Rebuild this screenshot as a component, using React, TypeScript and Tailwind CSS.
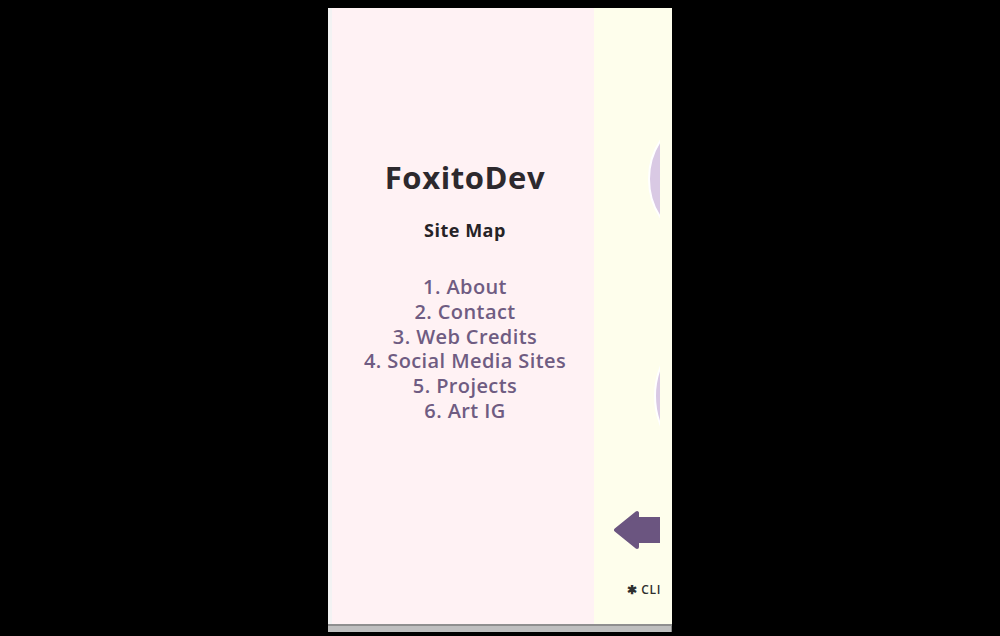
const siteMap = [
    "1. About",
    "2. Contact",
    "3. Web Credits",
    "4. Social Media Sites",
    "5. Projects",
    "6. Art IG",
];

const App: React.FC = () => {
    return (
        <div className="flex h-[636px] w-full justify-center overflow-hidden bg-black pt-[8px] font-['Open_Sans',sans-serif]">
            <div className="flex h-[624px] w-[344px] flex-col">
                <div className="flex h-[616px]">
                    <div className="w-[4px] bg-[#f3f3f3]" />
                    <div className="flex w-[262px] flex-col items-center bg-[#fff2f4] pt-[149px] pl-[4px]">
                        <h1 className="text-[31px] font-bold leading-[40px] tracking-[0.6px] text-[#2d292d]">
                            FoxitoDev
                        </h1>
                        <h2 className="mt-[21px] text-[18px] font-bold leading-[24px] tracking-[0.5px] text-[#262326]">
                            Site Map
                        </h2>
                        <ul className="mt-[33px] flex flex-col items-center text-[20px] font-semibold leading-[24.8px] tracking-[0.4px] text-[#6f5c82]">
                            {siteMap.map((item) => (
                                <li key={item}>{item}</li>
                            ))}
                        </ul>
                    </div>
                    <div className="w-[78px] bg-[#fefeec] pr-[12px]">
                        <div className="flex h-full w-[66px] flex-col overflow-hidden">
                            <div className="mt-[101px] h-[140px] w-[200px] shrink-0 pl-[54px]">
                                <div className="h-[140px] w-[140px] rounded-full border-2 border-white bg-[#d9c9e4]" />
                            </div>
                            <div className="mt-[67px] h-[160px] w-[240px] shrink-0 pl-[60px]">
                                <div className="h-[160px] w-[160px] rounded-full border-2 border-white bg-[#d9c9e4]" />
                            </div>
                            <div className="mt-[34px] h-[40px] w-[120px] shrink-0 pl-[19px]">
                                <svg width="70" height="40" viewBox="0 0 70 40">
                                    <path
                                        d="M3 20 L24 3 L24 9 L66 9 L66 31 L24 31 L24 37 Z"
                                        fill="#6b5580"
                                        stroke="#6b5580"
                                        strokeWidth="4"
                                        strokeLinejoin="round"
                                    />
                                </svg>
                            </div>
                            <div className="mt-[32px] shrink-0 whitespace-nowrap pl-[33px] text-[12px] font-semibold leading-[15px] tracking-[0.6px] text-[#2f2f2f]">
                                ✱ CLI
                            </div>
                        </div>
                    </div>
                </div>
                <div className="h-[2px] bg-[#8f8f8f]" />
                <div className="h-[6px] border-r border-[#8a8a8a] bg-[#bfbfbf]" />
            </div>
        </div>
    );
};

export default App;
